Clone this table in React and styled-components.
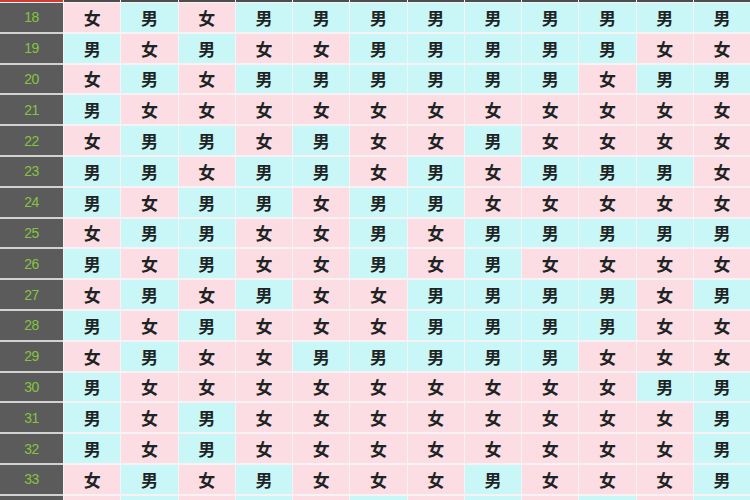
import React from 'react';
import styled, { createGlobalStyle } from 'styled-components';

const GlobalStyle = createGlobalStyle`
  html, body {
    margin: 0;
    padding: 0;
    background: #f6f3f5;
    overflow: hidden;
  }
`;

const rows = [
  [18, '女男女男男男男男男男男男'],
  [19, '男女男女女男男男男男女女'],
  [20, '女男女男男男男男男女男男'],
  [21, '男女女女女女女女女女女女'],
  [22, '女男男女男女女男女女女女'],
  [23, '男男女男男女男女男男男女'],
  [24, '男女男男女男男女女女女女'],
  [25, '女男男女女男女男男男男男'],
  [26, '男女男女女男女男女女女女'],
  [27, '女男女男女女男男男男女男'],
  [28, '男女男女女女男男男男女女'],
  [29, '女男女女男男男男男女女女'],
  [30, '男女女女女女女女女女男男'],
  [31, '男女男女女女女女女女女男'],
  [32, '男女男女女女女女女女女男'],
  [33, '女男女男女女女男女女女男'],
];

const Table = styled.div`
  width: 750px;
  height: 500px;
  overflow: hidden;
  display: flex;
  flex-direction: column;
`;

const Row = styled.div`
  display: grid;
  grid-template-columns: 63px repeat(12, 1fr);
  column-gap: 1px;
  flex: none;
`;

const HeaderEdge = styled.div`
  height: 2px;
  margin-bottom: 1px;
  background: ${p => (p.first ? '#d23a32' : '#4d4d4d')};
`;

const Label = styled.div`
  height: 28.8px;
  border-bottom: 2px solid #d2d2d2;
  background: #5b5b5b;
  color: #86c440;
  font-family: 'Liberation Sans', Arial, sans-serif;
  font-size: 14px;
  display: flex;
  align-items: center;
  justify-content: center;
  letter-spacing: -0.5px;
`;

const Cell = styled.div`
  height: 28.8px;
  border-bottom: 2px solid #f7f2f4;
  background: ${p => (p.boy ? '#c9f6f6' : '#fcdde3')};
  color: #1e2424;
  font-family: 'Noto Sans CJK SC', 'Noto Sans', sans-serif;
  font-size: 17px;
  font-weight: 600;
  display: flex;
  align-items: center;
  justify-content: center;
`;

const App = () => (
  <>
    <GlobalStyle />
    <Table>
      <Row>
        {Array.from({ length: 13 }).map((_, i) => (
          <HeaderEdge key={i} first={i === 0} />
        ))}
      </Row>
      {rows.map(([age, genders]) => (
        <Row key={age}>
          <Label>{age}</Label>
          {genders.split('').map((g, i) => (
            <Cell key={i} boy={g === '男'}>{g}</Cell>
          ))}
        </Row>
      ))}
      <Row>
        <Label />
        {Array.from({ length: 12 }).map((_, i) => (
          <Cell key={i} boy={i % 2 === 1} />
        ))}
      </Row>
    </Table>
  </>
);

export default App;
